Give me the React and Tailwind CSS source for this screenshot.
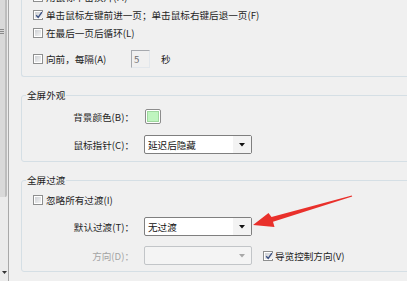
import React from 'react';

const Box = ({ checked }) => (
  <span className="w-[10px] h-[10px] shrink-0 border border-[#8e8f8f] bg-white p-[1px] flex">
    <span className="flex-1 flex items-center justify-center bg-linear-to-br from-[#cdd0d4] to-[#f5f5f5]">
      {checked && (
        <svg width="8" height="8" viewBox="0 0 8 8">
          <path d="M1.2 4.2 L3.2 6.4 L6.9 1.2" fill="none" stroke="#3d5283" strokeWidth="1.4" />
        </svg>
      )}
    </span>
  </span>
);

const Select = ({ value, disabled }) => (
  <div
    className={`w-[108px] h-[19px] flex rounded-[2px] border ${
      disabled ? 'border-[#c2c5c8] bg-[#f4f4f4]' : 'border-[#7f7f7f] bg-white'
    }`}
  >
    <span className="flex-1 pl-[3px] flex items-center text-[#111]">{value}</span>
    <span className={`w-[18px] flex items-center justify-center ${disabled ? '' : 'bg-[#f3f3f3]'}`}>
      <svg width="6" height="4" viewBox="0 0 6 4">
        <path d="M0 0 H6 L3 3.5 Z" fill={disabled ? '#a8a8a8' : '#111'} />
      </svg>
    </span>
  </div>
);

export default function App() {
  return (
    <div className="relative w-[407px] h-[281px] overflow-hidden bg-[#f0f0f0] flex font-['Noto_Sans_CJK_SC',sans-serif] text-[9.6px] leading-[12px] text-[#1e1e1e]">
      {/* scrollbar */}
      <div className="w-[9px] shrink-0 border-r border-[#a8a8a8] bg-[#ebebeb] flex flex-col">
        <div className="h-[197px] w-[7px] bg-[#d9d9d9] border-r-2 border-[#bdbdbd] rounded-br-[2px] flex flex-col gap-[1px] pt-[29px]">
          <span className="w-[4px] h-[1px] bg-[#8a8a8a]" />
          <span className="w-[4px] h-[1px] bg-[#8a8a8a]" />
          <span className="w-[4px] h-[1px] bg-[#8a8a8a]" />
        </div>
        <div className="flex-1" />
        <div className="h-[10px] pl-[2px]">
          <svg width="5" height="3" viewBox="0 0 5 3">
            <path d="M0 0 H5 L2.5 3 Z" fill="#333" />
          </svg>
        </div>
      </div>

      {/* content */}
      <div className="flex-1 min-w-0 pl-[12px] flex flex-col">
        {/* playback group (top cut off) */}
        <div className="-mt-[12px] w-[420px] shrink-0 border-l border-b border-[#d5dfe5] rounded-bl-[3px] pl-[11px] pb-[8px]">
          <div className="h-[18px] flex items-center gap-[3px]">
            <Box />
            <span>用鼠标单击换片(M)</span>
          </div>
          <div className="h-[18px] flex items-center gap-[3px]">
            <Box checked />
            <span>单击鼠标左键前进一页；单击鼠标右键后退一页(F)</span>
          </div>
          <div className="h-[18px] flex items-center gap-[3px]">
            <Box />
            <span>在最后一页后循环(L)</span>
          </div>
          <div className="mt-[8px] h-[18px] flex items-center gap-[3px]">
            <Box />
            <span className="w-[82px]">向前，每隔(A)</span>
            <span className="w-[19px] h-[18px] border-t border-l border-[#a6a9ae] border-r border-b border-r-[#e2e7ec] border-b-[#e2e7ec] pl-[2px] flex items-center text-[#6d6d6d]">
              5
            </span>
            <span className="ml-[8px]">秒</span>
          </div>
        </div>

        {/* appearance group */}
        <fieldset className="mt-[12px] w-[420px] shrink-0 border border-[#d5dfe5] rounded-[3px] pt-[6px] pb-[7px]">
          <legend className="ml-[4px] px-[1px] leading-[12px]">全屏外观</legend>
          <div className="h-[19px] flex items-center">
            <span className="w-[112px] text-right">背景颜色(B)：</span>
            <span className="ml-[11px] w-[16px] h-[15px] rounded-[2px] border border-[#8c8c8c] bg-white p-[1px] flex">
              <span className="flex-1 bg-[#bff5bf] border border-[#9fd89f]" />
            </span>
          </div>
          <div className="mt-[9px] h-[19px] flex items-center">
            <span className="w-[112px] text-right">鼠标指针(C)：</span>
            <span className="ml-[10px]">
              <Select value="延迟后隐藏" />
            </span>
          </div>
        </fieldset>

        {/* transition group */}
        <fieldset className="mt-[12px] w-[420px] shrink-0 border border-[#d5dfe5] rounded-[3px] pt-[5px] pb-[6px]">
          <legend className="ml-[4px] px-[1px] leading-[12px]">全屏过渡</legend>
          <div className="h-[18px] pl-[11px] flex items-center gap-[3px]">
            <Box />
            <span>忽略所有过渡(I)</span>
          </div>
          <div className="mt-[8px] h-[19px] flex items-center">
            <span className="w-[112px] text-right">默认过渡(T)：</span>
            <span className="ml-[10px]">
              <Select value="无过渡" />
            </span>
          </div>
          <div className="mt-[10px] h-[19px] flex items-center">
            <span className="w-[112px] text-right text-[#a3a3a3]">方向(D)：</span>
            <span className="ml-[10px]">
              <Select value="" disabled />
            </span>
            <span className="ml-[11px] flex items-center gap-[2px]">
              <Box checked />
              <span>导览控制方向(V)</span>
            </span>
          </div>
        </fieldset>
      </div>

      {/* annotation arrow */}
      <svg className="absolute left-0 top-0 pointer-events-none" width="407" height="281" viewBox="0 0 407 281">
        <polygon
          points="253,225 274.5,227 273,221.8 352.2,196.6 351.8,195.4 271.5,217 268.5,213"
          fill="#e9302b"
        />
      </svg>
    </div>
  );
}
